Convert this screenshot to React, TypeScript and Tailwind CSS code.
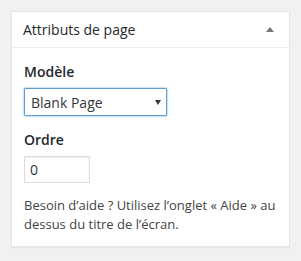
const App = () => {
  return (
    <div className="min-h-screen bg-[#f1f1f1] p-[11px] font-['Open_Sans',sans-serif]">
      <div className="w-[279px] border border-[#e5e5e5] bg-white shadow-[0_1px_1px_rgba(0,0,0,0.04)]">
        {/* Header */}
        <div className="flex h-[36px] items-center justify-between border-b border-[#eee] px-[11px]">
          <h2 className="text-[14px] leading-[20px] text-[#23282d]">Attributs de page</h2>
          <span className="mr-[4px] h-0 w-0 border-x-[4px] border-b-[5px] border-x-transparent border-b-[#72777c]" />
        </div>

        <div className="px-[12px] pb-[12px] pt-[14px]">
          <p className="text-[14px] font-semibold leading-[20px] text-[#23282d]">Modèle</p>
          <div className="mt-[6px] flex h-[28px] w-[143px] items-center justify-between rounded-[1px] border border-[#5b9dd9] pl-[6px] pr-[5px] shadow-[0_0_2px_rgba(30,140,190,0.8)]">
            <span className="text-[14px] text-[#32373c]">Blank Page</span>
            <span className="h-0 w-0 border-x-[3px] border-t-[5px] border-x-transparent border-t-[#32373c]" />
          </div>

          <p className="mt-[14px] text-[14px] font-semibold leading-[20px] text-[#23282d]">Ordre</p>
          <div className="mt-[6px] flex h-[27px] w-[66px] items-center border border-[#ddd] pl-[5px] shadow-[inset_0_1px_2px_rgba(0,0,0,0.07)]">
            <span className="text-[14px] text-[#32373c]">0</span>
          </div>

          <p className="mt-[13px] text-[13px] leading-[19px] text-[#444]">
            Besoin d’aide ? Utilisez l’onglet « Aide » au dessus du titre de l’écran.
          </p>
        </div>
      </div>
    </div>
  );
};

export default App;
